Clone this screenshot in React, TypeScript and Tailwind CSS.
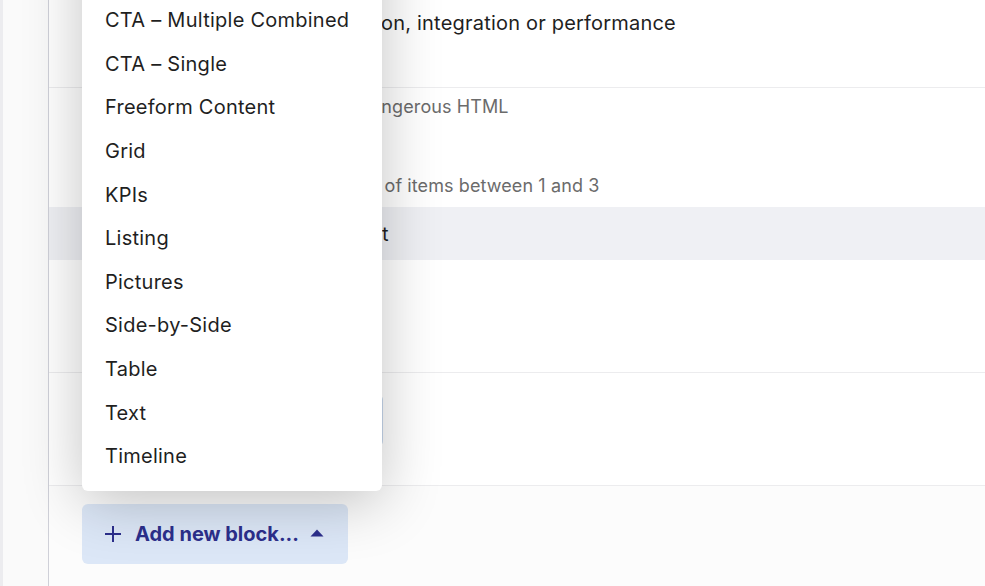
import React from "react";

const blockTypes = [
  "Accordion",
  "Carousel",
  "CTA – Multiple Combined",
  "CTA – Single",
  "Freeform Content",
  "Grid",
  "KPIs",
  "Listing",
  "Pictures",
  "Side-by-Side",
  "Table",
  "Text",
  "Timeline",
];

function PlusIcon() {
  return (
    <svg width="18" height="18" viewBox="0 0 18 18" fill="none" stroke="currentColor" strokeWidth="2">
      <path d="M9 1v16M1 9h16" />
    </svg>
  );
}

function CaretUp() {
  return (
    <svg width="14" height="8" viewBox="0 0 14 8" fill="currentColor">
      <path d="M7 0.5 L13.5 7.5 H0.5 Z" />
    </svg>
  );
}

export default function App() {
  return (
    <div
      className="relative flex h-[586px] w-[985px] overflow-hidden bg-white text-[#1f1f1f]"
      style={{ fontFamily: "Inter, 'Noto Sans', sans-serif" }}
    >
      {/* side rail */}
      <div className="flex h-full w-[49px] shrink-0 border-r border-[#cfd0d8] bg-[#fafafa]">
        <div className="h-full w-[3px] bg-[#ececef]" />
      </div>

      {/* block editor panel */}
      <div className="flex min-w-0 flex-1 flex-col">
        <div className="h-[88px] border-b border-[#ececee] pl-[133px] pt-[8px] text-[20px] leading-[30px] tracking-[0.2px]">
          Blocks for presentation, integration or performance
        </div>
        <div className="flex h-[36px] items-center pl-[129px] text-[18px] tracking-[0.1px] text-[#6b6b6b]">
          Content may include dangerous HTML
        </div>
        <div className="h-[43px]" />
        <div className="flex h-[36px] items-center pl-[191px] text-[18px] tracking-[0.1px] text-[#6b6b6b]">
          Allowed number of items between 1 and 3
        </div>
        <div className="h-[4px]" />
        <div className="flex h-[53px] items-center bg-[#eff0f4] pl-[209px] text-[20px]">
          Default layout
        </div>
        <div className="h-[113px] border-b border-[#ececee]" />
        <div className="h-[113px] border-b border-[#ececee] pl-[40px] pt-[21px]">
          <div className="h-[53px] w-[294px] rounded-[6px] border border-[#c9d9ee] bg-[#eef4fc]" />
        </div>
        <div className="flex-1 bg-[#fcfcfc]" />
      </div>

      {/* add block button */}
      <button className="absolute bottom-[22px] left-[82px] flex h-[60px] w-[266px] items-center rounded-[6px] bg-[#dce7f7] pl-[22px] text-[#2c2f8c]">
        <PlusIcon />
        <span className="ml-[13px] text-[20px] font-bold">Add new block...</span>
        <span className="ml-[11px] mt-[-2px]">
          <CaretUp />
        </span>
      </button>

      {/* block type menu, opened above the button */}
      <div className="absolute bottom-[95px] left-[82px] w-[300px] rounded-[6px] bg-white pb-[13px] shadow-[0_10px_60px_rgba(0,0,0,0.24)]">
        {blockTypes.map((t) => (
          <div key={t} className="flex h-[43.6px] items-center pl-[23px] text-[20px] tracking-[0.25px] text-[#1f1f1f]">
            {t}
          </div>
        ))}
      </div>
    </div>
  );
}
